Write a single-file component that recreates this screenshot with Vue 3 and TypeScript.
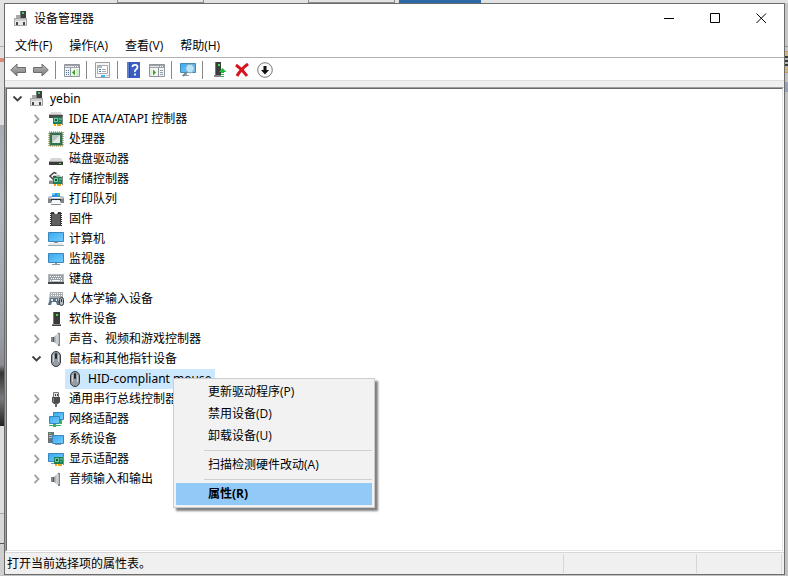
<script setup lang="ts">
import { ref } from 'vue'

interface Device {
  name: string
  icon: string
  children?: Device[]
}

const categories: Device[] = [
  { name: 'IDE ATA/ATAPI 控制器', icon: 'ide' },
  { name: '处理器', icon: 'cpu' },
  { name: '磁盘驱动器', icon: 'disk' },
  { name: '存储控制器', icon: 'storage' },
  { name: '打印队列', icon: 'printer' },
  { name: '固件', icon: 'firmware' },
  { name: '计算机', icon: 'pc' },
  { name: '监视器', icon: 'monitor' },
  { name: '键盘', icon: 'keyboard' },
  { name: '人体学输入设备', icon: 'hid' },
  { name: '软件设备', icon: 'software' },
  { name: '声音、视频和游戏控制器', icon: 'speaker' },
  {
    name: '鼠标和其他指针设备',
    icon: 'mouse',
    children: [{ name: 'HID-compliant mouse', icon: 'mouse' }],
  },
  { name: '通用串行总线控制器', icon: 'usb' },
  { name: '网络适配器', icon: 'network' },
  { name: '系统设备', icon: 'system' },
  { name: '显示适配器', icon: 'display' },
  { name: '音频输入和输出', icon: 'speaker' },
]

const menus = ['文件(F)', '操作(A)', '查看(V)', '帮助(H)']

const toolGroups = [
  [{ icon: 'back', label: '后退' }, { icon: 'forward', label: '前进' }],
  [{ icon: 'console-tree', label: '显示/隐藏控制台树' }],
  [{ icon: 'properties', label: '属性' }],
  [{ icon: 'help', label: '帮助' }, { icon: 'action-pane', label: '显示/隐藏操作窗格' }],
  [{ icon: 'scan', label: '扫描检测硬件改动' }],
  [
    { icon: 'update', label: '更新驱动程序' },
    { icon: 'remove', label: '卸载设备' },
    { icon: 'disable', label: '禁用设备' },
  ],
]

const contextGroups = [
  ['更新驱动程序(P)', '禁用设备(D)', '卸载设备(U)'],
  ['扫描检测硬件改动(A)'],
  ['属性(R)'],
]

const rootOpen = ref(true)
const opened = ref<string[]>(['鼠标和其他指针设备'])
const selected = ref('HID-compliant mouse')
const activeItem = ref('属性(R)')

function toggle(name: string) {
  opened.value = opened.value.includes(name)
    ? opened.value.filter((n) => n !== name)
    : [...opened.value, name]
}
</script>

<template>
  <svg class="sprite" aria-hidden="true">
    <defs>
      <linearGradient id="g-screen" x1="0" y1="0" x2="1" y2="1">
        <stop offset="0" stop-color="#3aa9f0" /><stop offset="1" stop-color="#74ccff" />
      </linearGradient>
      <linearGradient id="g-arrow" x1="0" y1="0" x2="0" y2="1">
        <stop offset="0" stop-color="#b9b9b9" /><stop offset="1" stop-color="#7d7d7d" />
      </linearGradient>
      <linearGradient id="g-metal" x1="0" y1="0" x2="1" y2="0">
        <stop offset="0" stop-color="#8b9195" /><stop offset="0.6" stop-color="#d9dde0" /><stop offset="1" stop-color="#a2a7ab" />
      </linearGradient>
    </defs>

    <symbol id="chev-right" viewBox="0 0 16 16"><path d="M5.5 4 9.5 8 5.5 12" fill="none" stroke="#a3a3a3" stroke-width="1.8" /></symbol>
    <symbol id="chev-down" viewBox="0 0 16 16"><path d="M3.500 5.500 7.500 9.500 11.500 5.500" fill="none" stroke="#404040" stroke-width="1.8" /></symbol>

    <symbol id="computer" viewBox="0 0 16 16">
      <path d="M3 4h4v4H3z" fill="#a9a9a9" />
      <path d="M7 0h6v8H7z" fill="#3f3f3f" /><path d="M7 0h1v8H7z" fill="#777" />
      <path d="M9 1h2v2H9z" fill="#37d35a" />
      <path d="M1.500 7.500h12v7h-12z" fill="#e9e9e9" stroke="#a3a3a3" />
      <path d="M2 8h11v2H2z" fill="#cfcfcf" />
      <path d="M3 11h2v3H3zM10 11h2v3h-2z" fill="#444" />
    </symbol>
    <symbol id="board" viewBox="0 0 10 10">
      <path d="M0 1h10v7H0z" fill="#1d7f54" /><path d="M1 2h4v4H1z" fill="#74c7a0" /><path d="M2 3h2v2H2z" fill="#165c3c" />
      <path d="M6 2h3v2H6zM6 5h2v1H6z" fill="#4aad7e" /><path d="M9 0h1v9H9z" fill="#888" />
      <path d="M1 8h2v2H1zM4 8h4v2H4z" fill="#f0a51e" />
    </symbol>
    <symbol id="ide" viewBox="0 0 16 16">
      <path d="M3 1h10l1 3H1z" fill="#dcdcdc" /><path d="M1 4h14v3H1z" fill="#4a4a4a" /><path d="M1 3h13v1H1z" fill="#b5b5b5" />
      <use href="#board" x="5" y="5" width="10" height="10" />
    </symbol>
    <symbol id="cpu" viewBox="0 0 16 16">
      <path d="M1 1h14v14H1z" fill="none" stroke="#b9a25a" stroke-width="1.600" stroke-dasharray="1 1" />
      <path d="M1.500 1.500h13v13h-13z" fill="#33704f" /><path d="M4 4h8v8H4z" fill="#b9c4be" /><path d="M4 12 12 4v8z" fill="#e4e9e6" />
    </symbol>
    <symbol id="disk" viewBox="0 0 16 16">
      <path d="M3 7h10l2 4H1z" fill="#d6d6d6" /><path d="M1 11h14v3H1z" fill="#3c3c3c" /><path d="M1 10h14v1H1z" fill="#a3a3a3" />
      <path d="M11 12h2v1h-2z" fill="#42e05c" />
    </symbol>
    <symbol id="storage" viewBox="0 0 16 16">
      <path d="M8.500 2.500 6 1.500 2 5l3.500 3.500M5 5.500h4" fill="none" stroke="#444" stroke-width="1.500" />
      <path d="M1 10h5v3H1z" fill="#8a8a8a" /><path d="M1 9h5v1H1z" fill="#ccc" /><path d="M10 3l4 3H8z" fill="#b5b5b5" />
      <use href="#board" x="5" y="5" width="10" height="10" />
    </symbol>
    <symbol id="printer" viewBox="0 0 16 16">
      <path d="M4 2h8v4H4z" fill="#2a8fe8" /><path d="M9 2h3v3H9z" fill="#39c47b" /><path d="M4 2h3v2H4z" fill="#76c9f5" />
      <path d="M1 5h3v2h8V5h3l1 3v4H0V8z" fill="#7e8388" /><path d="M1 5h3v2h8V5h3v3H1z" fill="#c0c4c8" />
      <path d="M3 8h10v2H3z" fill="#2f3235" /><path d="M4 9h8l1 5H3z" fill="#f4f7fa" /><path d="M3 13h10v1H3z" fill="#8b8f94" />
    </symbol>
    <symbol id="firmware" viewBox="0 0 16 16">
      <path d="M2 2.500h12M2 4.500h12M2 6.500h12M2 8.500h12M2 10.500h12M2 12.500h12M2 14.500h12" stroke="#333" />
      <path d="M3 1h3l1 2h2l1-2h3v14H3z" fill="#3b3b3b" /><path d="M4 3h8v11H4z" fill="#606060" /><path d="M6 1h4l-1 2H7z" fill="#fff" />
    </symbol>
    <symbol id="pc" viewBox="0 0 16 16">
      <path d="M.5 1.500h15v9H.5z" fill="url(#g-screen)" stroke="#3a86b8" />
      <path d="M6 11h4v1H6z" fill="#999" /><path d="M1 12h14v2H1z" fill="#e6eaec" /><path d="M0 14h16v1H0z" fill="#97a8b1" />
    </symbol>
    <symbol id="monitor" viewBox="0 0 16 16">
      <path d="M.5 2.500h15v9H.5z" fill="url(#g-screen)" stroke="#3a86b8" />
      <path d="M7 12h2v1H7z" fill="#7e99a8" /><path d="M4 13h8v1H4z" fill="#899aa3" />
    </symbol>
    <symbol id="keyboard" viewBox="0 0 16 16">
      <path d="M0 3h16v8H0z" fill="#b4b8bc" /><path d="M0 11h16v2H0z" fill="#41464b" />
      <path d="M1 4h14v6H1z" fill="#9ba0a5" />
      <path d="M2 5.500h12M3 7.500h11" stroke="#fff" stroke-dasharray="1 1" /><path d="M2 9.500h1M4 9.500h8M13 9.500h1" stroke="#fff" />
    </symbol>
    <symbol id="hid" viewBox="0 0 16 16">
      <path d="M2 1h13v7H1z" fill="#a9adb1" /><path d="M3 2.500h11M3 4.500h11" stroke="#fff" stroke-dasharray="1 1" />
      <path d="M2 7h8l2 7H9L8 11H4l-1 3H0z" fill="#5a7286" /><path d="M3 8h2v2H3zM8 8h1v2H8z" fill="#dce8f1" />
      <rect x="11.500" y="6.500" width="4" height="8" rx="2" fill="#b9bcbf" stroke="#373737" /><path d="M13 8h1v3h-1z" fill="#333" />
      <path d="M7 8h1v1H7z" fill="#e2574c" />
    </symbol>
    <symbol id="software" viewBox="0 0 16 16">
      <path d="M5 1h7v12H5z" fill="#3a3a3a" /><path d="M5 1h1v12H5z" fill="#777" /><path d="M8 3h2v2H8z" fill="#39e332" />
      <path d="M4 13h9v2H4z" fill="#8c8c8c" /><path d="M4 14h9v1H4z" fill="#444" />
    </symbol>
    <symbol id="speaker" viewBox="0 0 16 16">
      <path d="M3 6h3v5H3z" fill="#81878b" /><path d="M5 6h1v5H5z" fill="#555b5f" /><path d="M6 6 11 1v14l-5-4z" fill="url(#g-metal)" />
      <path d="M10 2h2v13h-2z" fill="#7d8387" /><path d="M10 3h1v10h-1z" fill="#b9bec1" />
    </symbol>
    <symbol id="mouse" viewBox="0 0 16 16">
      <rect x="3.500" y=".5" width="9" height="15" rx="4.500" fill="#969ca1" stroke="#353b40" />
      <path d="M5.500 4v7M10.500 4v7" stroke="#c9ced1" /><rect x="7" y="2" width="2" height="6" rx="1" fill="#22282c" />
    </symbol>
    <symbol id="usb" viewBox="0 0 16 16">
      <path d="M5.500 1.500h5v5h-5z" fill="#e4e4e4" stroke="#777" /><path d="M7 3h1v2H7zM9 3h1v2H9z" fill="#444" />
      <path d="M4 6h8v5l-2 2H6l-2-2z" fill="#4c4c4c" /><path d="M5 7h1v4H5z" fill="#888" /><path d="M7 12h2v4H7z" fill="#666" />
    </symbol>
    <symbol id="network" viewBox="0 0 16 16">
      <path d="M5.500 1.500h10v7h-10z" fill="url(#g-screen)" stroke="#3488bd" />
      <path d="M12 9h2v4h-2z" fill="#34b45b" />
      <path d="M1.500 5.500h10v7h-10z" fill="url(#g-screen)" stroke="#3488bd" />
      <path d="M1 14h12v1H1zM5 13h3v3H5z" fill="#34b45b" />
    </symbol>
    <symbol id="system" viewBox="0 0 16 16">
      <path d="M0 1h6v11H0z" fill="#6a7177" /><path d="M1 4.500h4M1 6.500h3" stroke="#b9bfc3" /><path d="M1 2h2v1H1z" fill="#44db58" />
      <path d="M4.500 4.500h11v8h-11z" fill="url(#g-screen)" stroke="#3a86b8" /><path d="M7 13h6v1H7z" fill="#899aa3" />
    </symbol>
    <symbol id="display" viewBox="0 0 16 16">
      <path d="M.5 2.500h15v8H.5z" fill="url(#g-screen)" stroke="#3a86b8" /><path d="M3 12h3v1H3z" fill="#899aa3" />
      <use href="#board" x="6" y="5" width="10" height="10" />
    </symbol>

    <symbol id="back" viewBox="0 0 16 16"><path d="M.7 8 7 2v3.500h8.500v5H7V14z" fill="url(#g-arrow)" stroke="#6c6c6c" /></symbol>
    <symbol id="forward" viewBox="0 0 16 16"><path d="M15.300 8 9 2v3.500H.5v5H9V14z" fill="url(#g-arrow)" stroke="#6c6c6c" /></symbol>
    <symbol id="console-tree" viewBox="0 0 16 16">
      <path d="M.5 2.500h15v12H.5z" fill="#f5f5f5" stroke="#8f959a" /><path d="M1 3h14v3H1z" fill="#9fa5aa" /><path d="M1 4.500h9" stroke="#e4e6e8" /><path d="M11 4.500h4" stroke="#fff" stroke-dasharray="1 1" />
      <path d="M6.500 6v8" stroke="#8f959a" /><path d="M2 8.500h1M4 8.500h1M2 10.500h1M4 10.500h1M2 12.500h1M4 12.500h1" stroke="#3b6f99" />
      <path d="M8 10.500 11 7.500v6z" fill="#33a51f" /><path d="M12 7h3v7h-3z" fill="#d7ead2" />
    </symbol>
    <symbol id="action-pane" viewBox="0 0 16 16">
      <path d="M.5 2.500h15v12H.5z" fill="#f5f5f5" stroke="#8f959a" /><path d="M1 3h14v3H1z" fill="#9fa5aa" /><path d="M1 4.500h9" stroke="#e4e6e8" /><path d="M11 4.500h4" stroke="#fff" stroke-dasharray="1 1" />
      <path d="M9.500 6v8" stroke="#8f959a" /><path d="M11 8.500h3M11 10.500h3M11 12.500h3" stroke="#8aa0b3" />
      <path d="M7 10.500 4 7.500v6z" fill="#33a51f" /><path d="M1 7h2v7H1z" fill="#e2efdf" />
    </symbol>
    <symbol id="properties" viewBox="0 0 16 16">
      <path d="M.5 .5h14v15H.5z" fill="#f4f6f8" stroke="#9a9fa4" /><path d="M2.500 3.500h10v8h-10z" fill="#fff" stroke="#a4aab0" />
      <path d="M3 4h4v2H3z" fill="#b4bac0" /><path d="M4 7.500h2M4 9.500h2" stroke="#3482bd" /><path d="M7 7.500h4M7 9.500h4" stroke="#aaa" />
      <path d="M6 13h4v2H6z" fill="#3bb9ee" /><path d="M11 13h3v1h-3z" fill="#ccc" />
    </symbol>
    <symbol id="help" viewBox="0 0 16 16">
      <path d="M1 0h13v16H1z" fill="#3a5fc0" /><path d="M1 0h2v16H1z" fill="#5f7fd0" /><path d="M3 0h1v16H3z" fill="#2a489c" />
      <path d="M6.500 5q0-2.200 2.500-2.200T11.500 5q0 1.500-1.500 2.500T9 10M9 11.500v2" fill="none" stroke="#fff" stroke-width="1.800" />
    </symbol>
    <symbol id="scan" viewBox="0 0 16 16">
      <path d="M.5 1.500h15v9H.5z" fill="url(#g-screen)" stroke="#4189b9" /><path d="M2 13h7v1H2z" fill="#8c9aa2" /><path d="M4 11h3v2H4z" fill="#a9b4ba" />
      <path d="m7 10-4 4" stroke="#7c8c95" stroke-width="2" /><circle cx="10" cy="6.500" r="4.300" fill="#b9e5fb" stroke="#8fa5b1" />
    </symbol>
    <symbol id="update" viewBox="0 0 16 16">
      <path d="M4 0h6v13H4z" fill="#3c3c3c" /><path d="M4 0h1v13H4z" fill="#777" /><path d="M7 2h2v2H7z" fill="#50db52" /><path d="M3 13h7v2H3z" fill="#858585" />
      <path d="m11.500 6 4 4H13v1h-3v-1H8zM10 12h3v1h-3zM10 14h3v1h-3z" fill="#22b83a" />
    </symbol>
    <symbol id="remove" viewBox="0 0 16 16"><path d="M2 3q6 4 11 11M14 2Q7 7 3 14" fill="none" stroke="#d9131c" stroke-width="3" /></symbol>
    <symbol id="disable" viewBox="0 0 16 16">
      <circle cx="8" cy="8" r="7.300" fill="#fafafa" stroke="#777" /><path d="M6.500 4h3v4H12l-4 4.500L4 8h2.500z" fill="#111" />
    </symbol>
  </svg>

  <div class="desktop">
    <div class="behind-top"><i class="tab"></i><i class="tab"></i><i class="tab active"></i></div>
    <div class="behind-left"></div>
    <main class="window">
      <header class="titlebar">
        <svg class="icon"><use href="#computer" /></svg>
        <h1>设备管理器</h1>
        <button type="button" class="caption" aria-label="最小化">
          <svg viewBox="0 0 11 11"><path d="M0 5.500h10" /></svg>
        </button>
        <button type="button" class="caption" aria-label="最大化">
          <svg viewBox="0 0 11 11"><path d="M.5 .5h9v9h-9z" /></svg>
        </button>
        <button type="button" class="caption" aria-label="关闭">
          <svg viewBox="0 0 11 11"><path d="M.5 .5l9.500 9.500M10 .5.5 10" /></svg>
        </button>
      </header>

      <nav class="menubar">
        <button v-for="m in menus" :key="m" type="button">{{ m }}</button>
      </nav>

      <div class="toolbar" role="toolbar">
        <div v-for="(group, g) in toolGroups" :key="g" class="tool-group">
          <button v-for="t in group" :key="t.icon" type="button" :aria-label="t.label">
            <svg class="icon"><use :href="'#' + t.icon" /></svg>
          </button>
        </div>
      </div>

      <section class="pane">
        <div class="sunken">
          <ul class="tree" role="tree">
            <li role="treeitem" :aria-expanded="rootOpen">
              <div class="row">
                <button type="button" class="expander" aria-label="展开" @click="rootOpen = !rootOpen">
                  <svg class="icon"><use :href="rootOpen ? '#chev-down' : '#chev-right'" /></svg>
                </button>
                <span class="node" @click="selected = 'yebin'"><svg class="icon"><use href="#computer" /></svg>yebin</span>
              </div>
              <ul v-if="rootOpen" role="group">
                <li v-for="c in categories" :key="c.name" role="treeitem" :aria-expanded="opened.includes(c.name)">
                  <div class="row">
                    <button type="button" class="expander" aria-label="展开" @click="toggle(c.name)">
                      <svg class="icon"><use :href="opened.includes(c.name) ? '#chev-down' : '#chev-right'" /></svg>
                    </button>
                    <span class="node" :class="{ selected: selected === c.name }" @click="selected = c.name">
                      <svg class="icon"><use :href="'#' + c.icon" /></svg>{{ c.name }}
                    </span>
                  </div>
                  <ul v-if="c.children && opened.includes(c.name)" role="group">
                    <li v-for="d in c.children" :key="d.name" role="treeitem">
                      <div class="row leaf">
                        <span class="node" :class="{ selected: selected === d.name }" @click="selected = d.name">
                          <svg class="icon"><use :href="'#' + d.icon" /></svg>{{ d.name }}
                        </span>
                      </div>
                    </li>
                  </ul>
                </li>
              </ul>
            </li>
          </ul>
        </div>
      </section>

      <footer class="statusbar">
        <p>打开当前选择项的属性表。</p>
        <span class="cell wide"></span>
        <span class="cell"></span>
      </footer>
    </main>
    <div class="behind-right"></div>

    <div class="context-menu" role="menu">
      <div v-for="(group, g) in contextGroups" :key="g" class="menu-group">
        <button
          v-for="item in group"
          :key="item"
          type="button"
          role="menuitem"
          :class="{ active: activeItem === item, primary: item === '属性(R)' }"
          @mouseenter="activeItem = item"
        >{{ item }}</button>
      </div>
    </div>
  </div>
</template>

<style>
body {
  margin: 0;
}
</style>

<style scoped>
.sprite {
  position: absolute;
  width: 0;
  height: 0;
}

.desktop {
  position: relative;
  display: grid;
  grid-template: 3px 1fr / 4px 1fr 3px;
  box-sizing: border-box;
  min-height: 100vh;
  padding-bottom: 1px;
  background: #c2c2c2;
  color: #000;
  font: 12px/20px "Open Sans", "Noto Sans CJK SC", sans-serif;
}

.behind-top {
  grid-column: 1 / -1;
  display: flex;
  padding-left: 117px;
  background: #e2e2e2;
}

.tab {
  box-sizing: border-box;
  width: 87px;
  margin-right: 104px;
  border: 1px solid #8c8c8c;
  border-top: 0;
}

.tab + .tab {
  margin-right: 4px;
}

.tab.active {
  width: 82px;
  border: 0;
  background: #2a69a5;
}

.behind-left {
  background: linear-gradient(
    #e2e2e2 43px, #b0b0b0 43px 44px, #e0e0e0 44px 55px, #dc8a78 55px 59px, #dedede 59px 122px,
    #a9adb5 122px, #b6bac2 200px, #9a9ea7 330px, #8a8c90 362px, #333 370px, #77797c 395px, #222 423px,
    #dedede 423px 510px, #a8a8a8 510px 511px, #d8d8d8 511px 540px, #555 540px 541px, #cfcfcf 541px
  );
}

.behind-right {
  background:
    repeating-linear-gradient(#393939 0 2px, #b9b9b9 2px 4px) 0 53px / 100% 11px no-repeat,
    linear-gradient(
      #c6c6c6 43px, #909090 43px 44px, #c6c6c6 44px 48px, #c99f55 48px 49px, #d0b478 49px 69px,
      #c99f55 69px 70px, #c4c4c4 70px 79px, #9aa0bd 79px 89px, #c2c2c2 89px
    );
}

.window {
  display: flex;
  flex-direction: column;
  min-width: 0;
  border: 1px solid #6b6b6b;
  background: #fff;
}

.icon {
  display: block;
  flex: none;
  width: 16px;
  height: 16px;
}

button {
  margin: 0;
  padding: 0;
  border: 0;
  background: none;
  color: inherit;
  font: inherit;
}

ul {
  margin: 0;
  padding: 0;
  list-style: none;
}

.titlebar {
  display: flex;
  align-items: center;
  height: 29px;
  padding-left: 8px;
}

h1 {
  flex: 1;
  margin: 0 0 0 5px;
  font-size: 12px;
  font-weight: 400;
}

.caption {
  display: grid;
  place-items: center;
  width: 46px;
  height: 29px;
}

.caption svg {
  width: 11px;
  height: 11px;
  fill: none;
  stroke: #000;
}

.menubar {
  display: flex;
  gap: 17px;
  height: 22px;
  padding: 2px 0 0 10px;
  border-bottom: 1px solid #b0b0b0;
}

.toolbar {
  display: flex;
  padding-left: 1px;
  border-bottom: 1px solid #dfdfdf;
}

.tool-group {
  display: flex;
}

.tool-group + .tool-group::before {
  content: "";
  width: 1px;
  margin: 3px 4px 1px 3px;
  background: #8a8a8a;
}

.toolbar button {
  padding: 4px 3px 2px 4px;
}

.pane {
  display: flex;
  flex: 1;
  padding-top: 6px;
  background: #efefef;
}

.sunken {
  display: flex;
  flex: 1;
  border: 1px solid;
  border-color: #a0a0a0 #fff #fff #a0a0a0;
  background: #fff;
}

.tree {
  flex: 1;
  padding-left: 3px;
  border: 1px solid;
  border-color: #696969 #e3e3e3 #e3e3e3 #696969;
  font-family: "Noto Sans", "Noto Sans CJK SC", sans-serif;
}

.tree ul {
  padding-left: 19px;
}

.row {
  display: flex;
  align-items: center;
  height: 20px;
}

.row.leaf {
  padding-left: 16px;
}

.node {
  display: flex;
  align-items: center;
  gap: 5px;
  height: 20px;
  margin-left: 1px;
  padding: 0 4px 0 2px;
  white-space: nowrap;
}

.node.selected {
  background: #cce8ff;
}

.statusbar {
  display: flex;
  height: 21px;
  padding-right: 2px;
  border-top: 1px solid #d7d7d7;
  background: #f0f0f0;
}

.statusbar p {
  flex: 1;
  margin: 1px 0;
  padding-left: 2px;
  border-right: 1px solid #d7d7d7;
}

.cell {
  box-sizing: border-box;
  width: 85px;
  margin: 1px 0;
  border-right: 1px solid #d7d7d7;
}

.cell.wide {
  width: 133px;
}

.context-menu {
  position: absolute;
  top: 378px;
  left: 173px;
  box-sizing: border-box;
  width: 202px;
  padding: 2px;
  border: 1px solid #ccc;
  background: #f2f2f2;
  box-shadow: 3px 3px 2px rgba(0, 0, 0, 0.5);
}

.menu-group + .menu-group::before {
  content: "";
  display: block;
  height: 1px;
  margin: 3px 0 3px 28px;
  background: #d0d0d0;
}

.menu-group button {
  display: block;
  width: 100%;
  height: 22px;
  padding-left: 32px;
  text-align: left;
}

.menu-group button.active {
  background: #91c9f7;
}

.menu-group button.primary {
  font-weight: 700;
}
</style>
